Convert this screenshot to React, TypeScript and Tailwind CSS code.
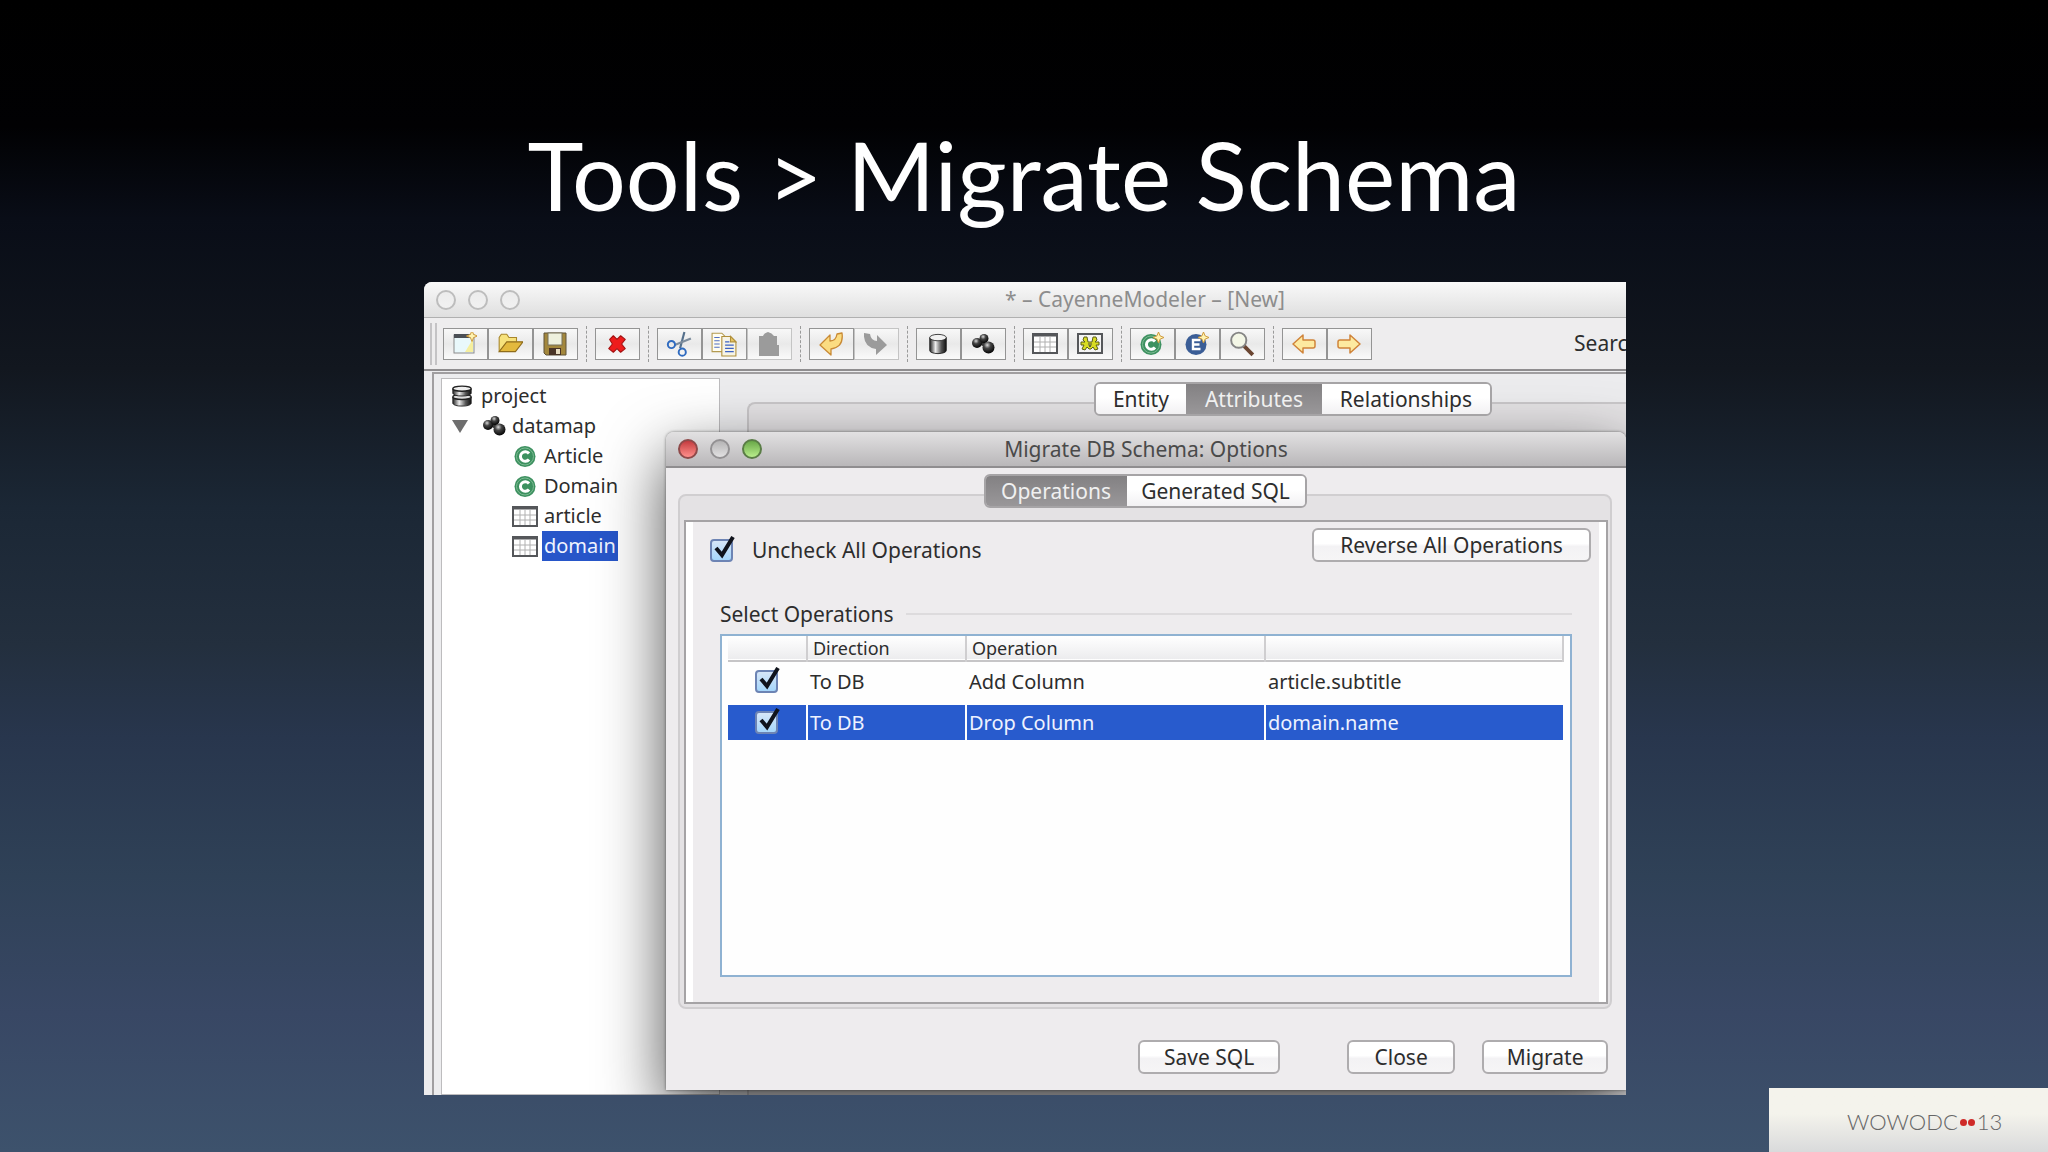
import type { ReactNode } from "react";

const uiFont = "font-['Noto_Sans','Open_Sans',sans-serif]";

/* ---------- Icons ---------- */

const Svg = ({ children, className = "size-6" }: { children: ReactNode; className?: string }) => (
    <svg viewBox="0 0 24 24" className={className} fill="none" aria-hidden="true">
        {children}
    </svg>
);

const Sparkle = ({ x, y }: { x: number; y: number }) => (
    <path
        d="M0 -5.5 L1.6 -1.6 L5.5 0 L1.6 1.6 L0 5.5 L-1.6 1.6 L-5.5 0 L-1.6 -1.6 Z"
        transform={`translate(${x} ${y})`}
        fill="#fff3b0"
        stroke="#cf9a3c"
    />
);

const NewIcon = () => (
    <Svg>
        <rect x="1" y="3" width="20" height="18" fill="#e9f8fb" stroke="#8b8b8b" />
        <rect x="1" y="2" width="20" height="4" fill="#4b4f55" />
        <path d="M12 20 L20 7 V20 Z" fill="#f6ef9d" />
        <Sparkle x={19} y={4} />
    </Svg>
);

const OpenIcon = () => (
    <Svg className="size-[26px]">
        <path d="M2 19 V6 L4 3 H9 L11 6 H18 V10" fill="#f7e27c" stroke="#a8862b" />
        <path d="M2 19 L9 10 H24 L17 19 Z" fill="#e3b93d" stroke="#8f6c1b" />
    </Svg>
);

const SaveIcon = () => (
    <Svg>
        <path d="M1 1 H23 V23 H3 L1 21 Z" fill="#a3873c" stroke="#5e5238" />
        <rect x="5" y="1" width="14" height="12" fill="#eef0dd" stroke="#77715a" />
        <rect x="6" y="16" width="12" height="7" fill="#4a3426" />
        <rect x="13" y="17" width="4" height="5" fill="#e8dcc0" />
    </Svg>
);

const RemoveIcon = () => (
    <Svg className="size-[22px]">
        <path
            d="M4 7 L8 3 L12 7 L16 3 L21 7 L17 12 L21 17 L16 21 L12 17 L8 21 L3 17 L7 12 Z"
            fill="#ee1c1c"
            stroke="#a51212"
            strokeWidth="1.2"
            strokeLinejoin="round"
        />
    </Svg>
);

const CutIcon = () => (
    <Svg className="size-[26px]">
        <path d="M17 1 L13 16" stroke="#55708c" strokeWidth="2" />
        <path d="M23 7 L8 13" stroke="#7d8c9c" strokeWidth="2" />
        <circle cx="5" cy="12.5" r="3.3" stroke="#2f6bc0" strokeWidth="1.8" />
        <circle cx="15" cy="19.5" r="3.3" stroke="#2f6bc0" strokeWidth="1.8" />
    </Svg>
);

const CopyIcon = () => (
    <Svg className="size-[26px]">
        <path d="M1 2 H10 L13 5 V19 H1 Z" fill="#fffdf0" stroke="#b39a50" />
        <path d="M3 6 H8 M3 9 H8 M3 12 H8 M3 15 H8" stroke="#4f6fc4" />
        <path d="M10 5 H18 L23 10 V23 H10 Z" fill="#f6f4e6" stroke="#b08f3a" />
        <path d="M18 5 V10 H23 Z" fill="#e8c766" stroke="#b08f3a" />
        <path d="M13 10 H17 M13 13 H21 M13 16 H21 M13 19 H21" stroke="#3d62c4" strokeWidth="1.2" />
    </Svg>
);

const PasteIcon = () => (
    <Svg>
        <path d="M2 4 H6 Q7 1 11 0 Q15 1 17 4 H20 V13 H22 V24 H2 Z" fill="#9b9b9b" />
    </Svg>
);

const UndoIcon = () => (
    <Svg>
        <path
            d="M1 13 L11 3 V9 Q17 9 18 2 L23 1 Q25 15 12 17 V23 Z"
            fill="#fbdc82"
            stroke="#c98a35"
            strokeWidth="1.3"
            strokeLinejoin="round"
        />
    </Svg>
);

const RedoIcon = () => (
    <Svg>
        <path d="M23 13 L13 3 V9 Q7 9 6 2 L0 1 Q-1 15 12 17 V23 Z" fill="#9b9b9b" />
    </Svg>
);

const DatabaseIcon = () => (
    <Svg className="size-[22px]">
        <defs>
            <linearGradient id="db" x1="0" x2="1">
                <stop offset="0" stopColor="#222" />
                <stop offset="0.35" stopColor="#eee" />
                <stop offset="0.7" stopColor="#555" />
                <stop offset="1" stopColor="#111" />
            </linearGradient>
        </defs>
        <path d="M3 5 V19 Q3 22 12 22.500 Q21 22 21 19 V5 Z" fill="url(#db)" stroke="#222" />
        <ellipse cx="12" cy="5" rx="9" ry="3.500" fill="#f2f2f2" stroke="#333" />
    </Svg>
);

const MapIcon = () => (
    <Svg>
        <defs>
            <radialGradient id="ball" cx="0.4" cy="0.3" r="0.7">
                <stop offset="0" stopColor="#d8d8d8" />
                <stop offset="0.4" stopColor="#444" />
                <stop offset="1" stopColor="#050505" />
            </radialGradient>
        </defs>
        <path d="M6 10 L13 6 L17 16 Z" fill="#333" stroke="#333" strokeWidth="1.500" />
        <circle cx="6" cy="11" r="5" fill="url(#ball)" />
        <circle cx="13" cy="6.500" r="4.500" fill="url(#ball)" />
        <circle cx="17.500" cy="15.500" r="6" fill="url(#ball)" />
    </Svg>
);

const ProjectIcon = () => (
    <Svg className="size-[22px]">
        <path d="M2 13 V20 Q3 23 12 23 Q21 23 22 20 V13 Z" fill="url(#db)" stroke="#222" />
        <ellipse cx="12" cy="13" rx="10" ry="2.800" fill="#ddd" stroke="#222" strokeWidth="1.500" />
        <path d="M2 4 V9 Q3 12 12 12 Q21 12 22 9 V4 Z" fill="url(#db)" stroke="#222" />
        <ellipse cx="12" cy="4" rx="10" ry="2.800" fill="#eee" stroke="#222" strokeWidth="1.500" />
    </Svg>
);

const TableIcon = () => (
    <svg viewBox="0 0 26 21" className="h-[21px] w-[26px]" fill="none" aria-hidden="true">
        <rect x="1" y="1" width="24" height="19" fill="#fff" stroke="#55575a" strokeWidth="2" />
        <path d="M1 2 H25" stroke="#55575a" strokeWidth="3" />
        <path d="M2 9 H24 M2 14 H24 M8 4 V19 M13 4 V19 M18 4 V19" stroke="#b0b0b0" />
    </svg>
);

const ProcedureIcon = () => (
    <svg viewBox="0 0 26 21" className="h-[21px] w-[26px]" fill="none" aria-hidden="true">
        <rect x="1" y="1" width="24" height="19" fill="#f4f4f4" stroke="#55575a" strokeWidth="2" />
        <path
            d="M7 4 H10 L11 9 H15 L16 4 H19 L20 7 L18 9 L22 9 V12 L19 12 L21 16 L18 17 L16 14 L14 16 H12 L10 14 L8 17 L5 16 L7 12 L4 12 V9 L8 9 L6 7 Z"
            fill="#d9dc22"
            stroke="#5d5f18"
        />
        <path d="M11 11 H15 M12 12 L13 14 L14 12" stroke="#444" />
    </svg>
);

const ClassIcon = ({ sparkle = false, entity = false }: { sparkle?: boolean; entity?: boolean }) => (
    <Svg>
        <circle cx="11" cy="12.500" r="10.500" fill={entity ? "#3a5d96" : "#3d9160"} />
        {entity ? (
            <path d="M15.500 8 H8 V17 H15.500 M8 12.500 H14.500" stroke="#fff" strokeWidth="2.400" />
        ) : (
            <>
                <circle cx="11" cy="12.500" r="8.500" stroke="#7dbb93" />
                <path d="M15 9.500 A4.800 4.800 0 1 0 15 15.500" stroke="#fff" strokeWidth="3" />
            </>
        )}
        {sparkle && <Sparkle x={18.5} y={5.5} />}
    </Svg>
);

const SearchIcon = () => (
    <Svg className="size-[26px]">
        <path d="M14 14 L22 22" stroke="#6b4632" strokeWidth="3.500" />
        <circle cx="9" cy="8.500" r="7" fill="#f3f6e6" stroke="#858585" strokeWidth="1.800" />
    </Svg>
);

const ArrowIcon = ({ right = false }: { right?: boolean }) => (
    <Svg className={right ? "size-6 -scale-x-100" : "size-6"}>
        <path
            d="M1 12 L11 3 V8 H21 Q23 8 23 10 V14 Q23 16 21 16 H11 V21 Z"
            fill="#fdeaa0"
            stroke="#d0843a"
            strokeWidth="1.500"
            strokeLinejoin="round"
        />
    </Svg>
);

/* ---------- Controls ---------- */

type Tool = { label: string; icon: ReactNode; disabled?: boolean };

const toolGroups: Tool[][] = [
    [
        { label: "New", icon: <NewIcon /> },
        { label: "Open", icon: <OpenIcon /> },
        { label: "Save", icon: <SaveIcon /> },
    ],
    [{ label: "Remove", icon: <RemoveIcon /> }],
    [
        { label: "Cut", icon: <CutIcon /> },
        { label: "Copy", icon: <CopyIcon /> },
        { label: "Paste", icon: <PasteIcon />, disabled: true },
    ],
    [
        { label: "Undo", icon: <UndoIcon /> },
        { label: "Redo", icon: <RedoIcon />, disabled: true },
    ],
    [
        { label: "Create DataNode", icon: <DatabaseIcon /> },
        { label: "Create DataMap", icon: <MapIcon /> },
    ],
    [
        { label: "Create DbEntity", icon: <TableIcon /> },
        { label: "Create Procedure", icon: <ProcedureIcon /> },
    ],
    [
        { label: "Create ObjEntity", icon: <ClassIcon sparkle /> },
        { label: "Create Embeddable", icon: <ClassIcon sparkle entity /> },
        { label: "Find", icon: <SearchIcon /> },
    ],
    [
        { label: "Back", icon: <ArrowIcon /> },
        { label: "Forward", icon: <ArrowIcon right /> },
    ],
];

const ToolButton = ({ label, icon, disabled }: Tool) => (
    <button
        type="button"
        aria-label={label}
        disabled={disabled}
        className={`flex h-8 w-[45px] items-center justify-center border bg-linear-to-b from-[#f8f8f8] via-[#e9e9e9] to-[#fafafa] ${
            disabled ? "border-[#c4c4c4]" : "border-[#949494]"
        }`}
    >
        {icon}
    </button>
);

const PushButton = ({ children, className = "" }: { children: ReactNode; className?: string }) => (
    <button
        type="button"
        className={`h-[34px] rounded-md border-2 border-[#aeacae] bg-linear-to-b from-white from-45% via-[#f3f2f4] via-55% to-[#f6f5f6] text-[21px] leading-none text-[#2d2d2d] ${className}`}
    >
        {children}
    </button>
);

const TabBar = ({ tabs, active }: { tabs: { name: string; width: string }[]; active: string }) => (
    <div role="tablist" className="relative z-10 flex h-[34px] overflow-hidden rounded-md border-2 border-[#a6a4a6]">
        {tabs.map((tab) => (
            <button
                key={tab.name}
                type="button"
                role="tab"
                aria-selected={tab.name === active}
                className={`text-[21px] leading-none whitespace-nowrap ${tab.width} ${
                    tab.name === active
                        ? "bg-linear-to-b from-[#838183] to-[#999799] text-[#f0f0f0]"
                        : "bg-linear-to-b from-white from-45% to-[#f2f1f3] text-[#2d2d2d]"
                }`}
            >
                {tab.name}
            </button>
        ))}
    </div>
);

const CheckBox = ({ id, label }: { id: string; label?: string }) => (
    <span className="relative inline-block size-[23px] align-middle">
        <input
            id={id}
            type="checkbox"
            defaultChecked
            aria-label={label}
            className="peer block size-full appearance-none rounded border-2 border-[#6d84b4] bg-linear-to-b from-[#d6e6f8] to-[#a5d6fb]"
        />
        <svg
            viewBox="0 0 26 28"
            className="pointer-events-none absolute -top-[3px] left-0 hidden h-7 w-[26px] peer-checked:block"
            fill="none"
            aria-hidden="true"
        >
            <path d="M6 12 L12 19 L23 1" stroke="#10131c" strokeWidth="4" />
        </svg>
    </span>
);

const lights = {
    red: "border-[#8f4a4a] from-[#c43a3f] to-[#ff8f8c]",
    gray: "border-[#939193] from-[#b5b4b5] to-[#e2e1e2]",
    green: "border-[#5a7d46] from-[#69a848] to-[#b9ee8c]",
    off: "border-[#bdbdbd] from-[#ececec] to-[#f1f1f1]",
};

const TrafficLights = ({ colors }: { colors: (keyof typeof lights)[] }) => (
    <div className="flex gap-3">
        {colors.map((color, i) => (
            <span key={i} className={`size-5 rounded-full border-2 bg-linear-to-b ${lights[color]}`} />
        ))}
    </div>
);

/* ---------- Main window ---------- */

const ProjectTree = () => (
    <ul className="w-[279px] shrink-0 border border-[#bdbcbe] bg-white pt-[2px] text-xl leading-[30px] text-[#2d2d2d]">
        <li className="flex items-center gap-2 pl-[9px]">
            <ProjectIcon />
            project
        </li>
        <li className="flex items-center gap-[6px] pl-[10px]">
            <svg viewBox="0 0 16 13" className="mr-2 h-[13px] w-4" aria-hidden="true">
                <path d="M0 0 H16 L8 13 Z" fill="#6e6e6e" />
            </svg>
            <MapIcon />
            datamap
        </li>
        {["Article", "Domain"].map((name) => (
            <li key={name} className="flex items-center gap-1 pl-[72px]">
                <ClassIcon />
                <span className="px-[2px]">{name}</span>
            </li>
        ))}
        {["article", "domain"].map((name) => (
            <li key={name} className="flex items-center gap-1 pl-[70px]">
                <TableIcon />
                <span className={name === "domain" ? "bg-[#2756c9] px-[2px] text-[#f0f4ff]" : "px-[2px]"}>
                    {name}
                </span>
            </li>
        ))}
    </ul>
);

/* ---------- Migration dialog ---------- */

const operations = [
    { id: "op-add", operation: "Add Column", target: "article.subtitle", selected: false },
    { id: "op-drop", operation: "Drop Column", target: "domain.name", selected: true },
];

const OperationsTable = () => (
    <div className="flex-1 border-2 border-[#8fb2d2] bg-[#fefefe] px-[6px]">
        <table className="w-full table-fixed border-collapse text-left">
            <colgroup>
                <col className="w-[79px]" />
                <col className="w-[159px]" />
                <col className="w-[299px]" />
                <col />
            </colgroup>
            <thead>
                <tr className="h-[25px] border-b-2 border-[#c6c5c7] bg-linear-to-b from-white to-[#ececee] text-lg leading-none text-[#2d2d2d]">
                    <th aria-label="Selected" />
                    <th className="border-l-2 border-[#cfced0] pl-[5px] font-normal">Direction</th>
                    <th className="border-l-2 border-[#cfced0] pl-[5px] font-normal">Operation</th>
                    <th className="border-x-2 border-[#cfced0]" aria-label="Target" />
                </tr>
            </thead>
            <tbody className="text-xl leading-none">
                {operations.map((op) => (
                    <tr
                        key={op.id}
                        className={
                            op.selected
                                ? "h-[35px] bg-[#285bcd] text-[#eef2ff]"
                                : "h-11 text-[#2d2d2d] *:pb-1"
                        }
                    >
                        <td className="text-center">
                            <CheckBox id={op.id} label={`${op.operation} ${op.target}`} />
                        </td>
                        <td className="border-l-2 border-[#fefefe] pl-[2px]">To DB</td>
                        <td className="border-l-2 border-[#fefefe] pl-[2px]">{op.operation}</td>
                        <td className="border-l-2 border-[#fefefe] pl-[2px]">{op.target}</td>
                    </tr>
                ))}
            </tbody>
        </table>
    </div>
);

const MigrateDialog = () => (
    <section
        role="dialog"
        aria-label="Migrate DB Schema: Options"
        className="absolute top-[150px] right-0 bottom-[5px] left-[242px] flex flex-col rounded-t-lg bg-[#eeecee] shadow-[0_24px_64px_rgba(0,0,0,0.7),0_0_3px_rgba(0,0,0,0.5)]"
    >
        <header className="relative flex h-[36px] shrink-0 items-center rounded-t-lg border-b-2 border-[#8f8d8f] bg-linear-to-b from-[#e2e1e2] to-[#b9b7b9] pl-3">
            <TrafficLights colors={["red", "gray", "green"]} />
            <h2 className="absolute inset-x-0 text-center text-[21px] leading-none text-[#4a4a4a]">
                Migrate DB Schema: Options
            </h2>
        </header>

        <div className="flex flex-1 flex-col pt-[6px] pr-[14px] pl-3">
            <div className="flex justify-center">
                <TabBar
                    active="Operations"
                    tabs={[
                        { name: "Operations", width: "w-[141px]" },
                        { name: "Generated SQL", width: "w-[178px]" },
                    ]}
                />
            </div>
            <div className="-mt-[14px] flex flex-1 flex-col rounded-lg border-2 border-[#d0ced0] bg-[#e4e2e4] pt-6 pr-[2px] pb-[3px] pl-1">
                <div className="flex flex-1 flex-col border-2 border-[#a5a3a5] bg-white px-[7px]">
                    <div className="flex flex-1 flex-col bg-[#eeecee] pr-[27px] pb-[25px] pl-[27px]">
                        {/* Bulk toggles */}
                        <div className="-mr-[19px] -ml-[10px] flex items-start justify-between pt-[6px]">
                            <div className="flex items-center gap-[19px] pt-[10px]">
                                <CheckBox id="toggle-all" />
                                <label htmlFor="toggle-all" className="text-[21px] leading-6 text-[#2d2d2d]">
                                    Uncheck All Operations
                                </label>
                            </div>
                            <PushButton className="w-[279px]">Reverse All Operations</PushButton>
                        </div>

                        <div className="mt-10 mb-2 flex items-center gap-3">
                            <h3 className="text-[21px] leading-6 text-[#2d2d2d]">Select Operations</h3>
                            <span className="h-[2px] flex-1 bg-[#dddbdd]" />
                        </div>
                        <OperationsTable />
                    </div>
                </div>
            </div>

            <footer className="flex justify-end pt-[31px] pr-1 pb-4">
                <PushButton className="mr-[67px] w-[142px]">Save SQL</PushButton>
                <PushButton className="mr-[27px] w-[108px]">Close</PushButton>
                <PushButton className="w-[126px]">Migrate</PushButton>
            </footer>
        </div>
    </section>
);

const App = () => {
    return (
        <main className="relative flex min-h-screen flex-col bg-[linear-gradient(to_bottom,#000_0%,#010103_11%,#090d17_19%,#12171f_32%,#1b2735_44%,#232f3e_56%,#28364d_64%,#2f4157_76%,#384764_88%,#3d526c_100%)]">
            <h1 className="pt-[114px] pb-[48px] text-center font-[Lato,sans-serif] text-[95px] leading-[120px] text-white">
                Tools &gt; Migrate Schema
            </h1>

            {/* Modeler window */}
            <div
                className={`relative mb-[57px] ml-[20.7%] flex w-[58.7%] flex-1 flex-col overflow-hidden rounded-tl-lg bg-[#ececee] ${uiFont}`}
            >
                <header className="relative flex h-[36px] shrink-0 items-center border-b border-[#b0b0b0] bg-linear-to-b from-[#f9f9f9] to-[#dfdfdf] pl-3">
                    <TrafficLights colors={["off", "off", "off"]} />
                    <h2 className="absolute inset-x-0 pl-60 text-center text-[21px] leading-none text-[#8d8d8d]">
                        * – CayenneModeler – [New]
                    </h2>
                </header>

                <div className="flex h-[51px] shrink-0 items-center bg-[#eeedee] pl-[6px]">
                    <span className="mr-[6px] h-[42px] w-[7px] border-x-2 border-[#c4c3c5]" />
                    {toolGroups.map((group, i) => (
                        <div key={group[0].label} className="flex items-center">
                            {i > 0 && <span className="mx-2 h-9 border-l border-dashed border-[#9a9a9a]" />}
                            {group.map((tool) => (
                                <ToolButton key={tool.label} {...tool} />
                            ))}
                        </div>
                    ))}
                    <span className="ml-auto w-[52px] shrink-0 text-[21px] leading-none whitespace-nowrap text-[#2d2d2d]">
                        Searc
                    </span>
                </div>

                <div className="flex flex-1 border-t-2 border-[#8f8d8f] pt-px pl-2">
                    <div className="flex flex-1 border-t-2 border-l-2 border-[#a09ea0] pt-1 pl-[7px]">
                        <ProjectTree />
                        <div className="flex flex-1 flex-col pt-1 pl-[27px]">
                            <div className="flex pl-[347px]">
                                <TabBar
                                    active="Attributes"
                                    tabs={[
                                        { name: "Entity", width: "w-[90px]" },
                                        { name: "Attributes", width: "w-[136px]" },
                                        { name: "Relationships", width: "w-[168px]" },
                                    ]}
                                />
                            </div>
                            <div className="-mt-[14px] flex-1 rounded-tl-lg border-t-2 border-l-2 border-[#c9c7c9] bg-[#e4e2e4]" />
                        </div>
                    </div>
                </div>

                <MigrateDialog />
            </div>

            {/* Conference badge */}
            <footer className="absolute right-0 bottom-0 flex h-16 w-[279px] items-center bg-linear-to-b from-[#f4f3ec] from-40% to-[#d9dadb] pt-1 pl-[78px] font-[Lato,sans-serif] text-[22px] leading-none font-light text-[#666]">
                WOWODC
                <span className="flex gap-px px-[2px]">
                    <span className="size-[7px] rounded-full bg-[#cf2a27]" />
                    <span className="size-[7px] rounded-full bg-[#cf2a27]" />
                </span>
                13
            </footer>
        </main>
    );
};

export default App;
